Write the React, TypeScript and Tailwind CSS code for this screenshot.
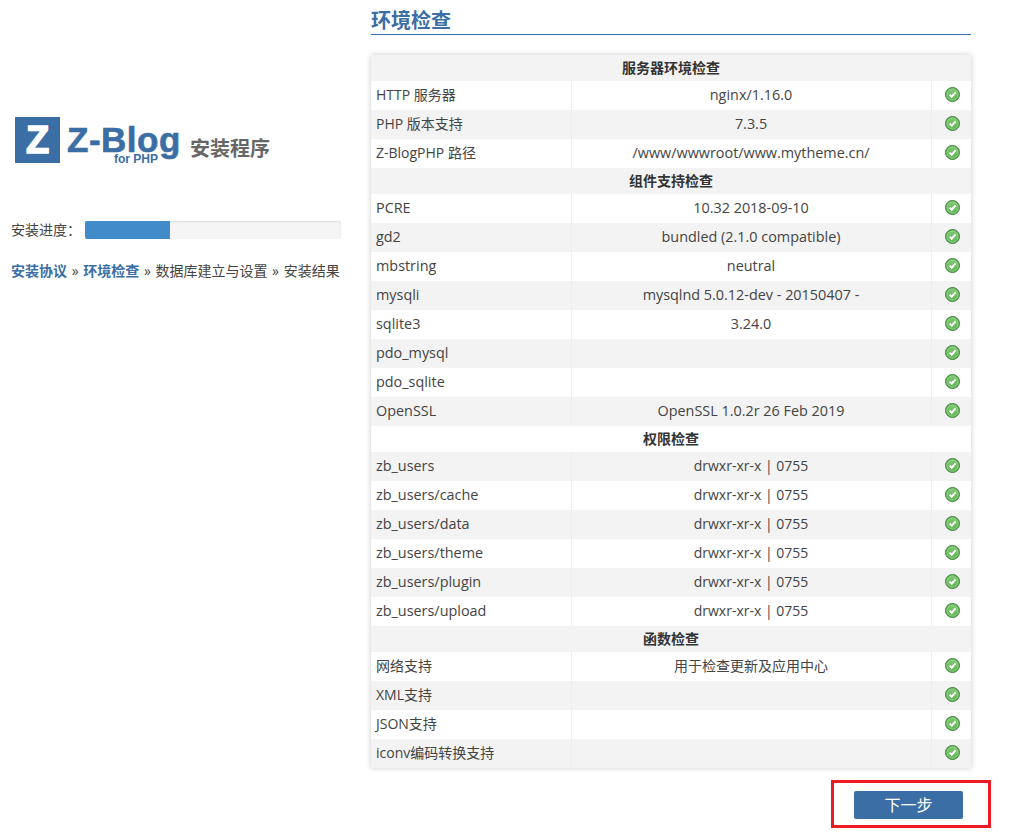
const font = { fontFamily: '"Open Sans","Noto Sans CJK SC",sans-serif' };

function Check() {
  return (
    <svg width="15" height="15" viewBox="0 0 15 15" className="relative left-[1px] mx-auto block">
      <defs>
        <linearGradient id="g" x1="0" y1="0" x2="0" y2="1">
          <stop offset="0" stopColor="#7fc870" />
          <stop offset="1" stopColor="#5fb556" />
        </linearGradient>
      </defs>
      <circle cx="7.5" cy="7.5" r="7" fill="#4a9a45" stroke="#3d8a3a" strokeWidth="1" />
      <circle cx="7.5" cy="7.5" r="5.7" fill="url(#g)" stroke="#a9dd9c" strokeWidth="0.8" />
      <path d="M4.6 7.6 L6.7 9.7 L10.6 5.4" fill="none" stroke="#fff" strokeWidth="2" />
    </svg>
  );
}

type Row = [string, string] | [string];
const rows: Row[] = [
  ["服务器环境检查"],
  ["HTTP 服务器", "nginx/1.16.0"],
  ["PHP 版本支持", "7.3.5"],
  ["Z-BlogPHP 路径", "/www/wwwroot/www.mytheme.cn/"],
  ["组件支持检查"],
  ["PCRE", "10.32 2018-09-10"],
  ["gd2", "bundled (2.1.0 compatible)"],
  ["mbstring", "neutral"],
  ["mysqli", "mysqlnd 5.0.12-dev - 20150407 -"],
  ["sqlite3", "3.24.0"],
  ["pdo_mysql", ""],
  ["pdo_sqlite", ""],
  ["OpenSSL", "OpenSSL 1.0.2r 26 Feb 2019"],
  ["权限检查"],
  ["zb_users", "drwxr-xr-x | 0755"],
  ["zb_users/cache", "drwxr-xr-x | 0755"],
  ["zb_users/data", "drwxr-xr-x | 0755"],
  ["zb_users/theme", "drwxr-xr-x | 0755"],
  ["zb_users/plugin", "drwxr-xr-x | 0755"],
  ["zb_users/upload", "drwxr-xr-x | 0755"],
  ["函数检查"],
  ["网络支持", "用于检查更新及应用中心"],
  ["XML支持", ""],
  ["JSON支持", ""],
  ["iconv编码转换支持", ""],
];

function valueClass(v: string) {
  const plain = v.startsWith("drwx") || /[^\x00-\x7f]/.test(v);
  return plain
    ? "border-r border-[#eeeeee] p-0 pb-[1px] text-center text-[14px] leading-none"
    : "border-r border-[#eeeeee] p-0 pb-[1px] text-center text-[14.4px] leading-none";
}

function labelClass(v: string) {
  return /[^\x00-\x7f]/.test(v)
    ? "border-r border-[#eeeeee] p-0 pb-[2px] pl-[5px] text-[14px] leading-none"
    : "border-r border-[#eeeeee] p-0 pb-[1px] pl-[5px] text-[14.4px] leading-none";
}

function Table() {
  return (
    <table className="w-[600px] table-fixed border-collapse text-[14px] text-[#444] shadow-[0_0_6px_rgba(0,0,0,0.2)]">
      <colgroup>
        <col className="w-[200px]" />
        <col className="w-[360px]" />
        <col className="w-[40px]" />
      </colgroup>
      <tbody>
        {rows.map((r, i) => {
          const bg = i % 2 === 0 ? "bg-[#f3f3f3]" : "bg-white";
          if (r.length === 1) {
            return (
              <tr key={i} className={"h-[26px] " + bg}>
                <td colSpan={3} className="p-0 text-center text-[14px] font-bold leading-none text-[#333]">
                  {r[0]}
                </td>
              </tr>
            );
          }
          return (
            <tr key={i} className={"h-[29px] " + bg}>
              <td className={labelClass(r[0])}>{r[0]}</td>
              <td className={valueClass(r[1])}>{r[1]}</td>
              <td className="p-0 pb-[2px]"><Check /></td>
            </tr>
          );
        })}
      </tbody>
    </table>
  );
}

function Sep() {
  return <span className="mx-[1px]">»</span>;
}

export default function App() {
  return (
    <div style={font} className="flex h-[832px] w-[1026px] overflow-hidden bg-white text-[#444]">
      <aside className="ml-[11px] w-[330px] shrink-0 pt-[116px]">
        <div className="ml-[4px] flex h-[48px] items-start">
          <div className="mt-[1px] flex h-[46px] w-[45px] items-center justify-center bg-[#3a6ea5] text-[38px] font-bold leading-none text-white [-webkit-text-stroke:1.5px_white] [font-family:'Liberation_Sans']">
            Z
          </div>
          <div className="relative ml-[7px] h-[48px] w-[115px]">
            <div className="mt-[11px] text-[35px] font-bold leading-[26px] tracking-[0.5px] text-[#3a6ea5] [-webkit-text-stroke:0.6px_#3a6ea5] [font-family:'Liberation_Sans']">
              Z-Blog
            </div>
            <div className="absolute left-[47px] top-[37px] text-[12px] font-bold leading-none text-[#3a6ea5] [font-family:'Liberation_Sans']">
              for PHP
            </div>
          </div>
          <div className="ml-[8px] mt-[23px] text-[20px] font-bold leading-none text-[#666]">安装程序</div>
        </div>
        <div className="mt-[57px] flex h-[18px] items-center">
          <span className="w-[74px] text-[14px] leading-none">安装进度：</span>
          <div className="h-[18px] w-[256px] rounded-[2px] bg-[#f5f5f5] shadow-[inset_0_1px_2px_rgba(0,0,0,0.1)]">
            <div className="h-full w-[85px] rounded-l-[2px] bg-[#428bca]" />
          </div>
        </div>
        <div className="mt-[23px] whitespace-nowrap text-[14px] leading-[18px]">
          <b className="font-bold text-[#3a6ea5]">安装协议</b> <Sep /> <b className="font-bold text-[#3a6ea5]">环境检查</b> <Sep /> 数据库建立与设置 <Sep /> 安装结果
        </div>
      </aside>
      <main className="ml-[30px] w-[600px] shrink-0">
        <h1 className="mt-[8px] h-[27px] border-b border-[#3a6ea5] text-[20px] font-bold leading-[26px] text-[#3a6ea5]">环境检查</h1>
        <div className="mt-[20px]">
          <Table />
        </div>
        <div className="mt-[23px] flex justify-end pr-[8px]">
          <div className="relative">
            <button className="block h-[28px] w-[109px] rounded-[2px] bg-[#3a6ea5] text-[16px] leading-none text-white">
              下一步
            </button>
            <div className="absolute -bottom-[9px] -left-[23px] -right-[28px] -top-[11px] border-[3px] border-[#ed1c24]" />
          </div>
        </div>
      </main>
    </div>
  );
}
